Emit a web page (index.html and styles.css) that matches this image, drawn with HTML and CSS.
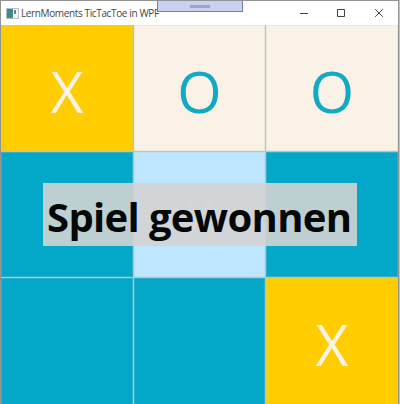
FILE: index.html
```html
<!DOCTYPE html>
<html lang="de">
<head>
<meta charset="utf-8">
<title>LernMoments TicTacToe in WPF</title>
<link rel="stylesheet" href="styles.css">
</head>
<body>
<div class="window">
  <header class="titlebar">
    <svg class="app-icon" width="13" height="11" viewBox="0 0 13 11">
      <defs><linearGradient id="g" x1="0" y1="0" x2="0" y2="1"><stop offset="0" stop-color="#3f7fa8"/><stop offset="1" stop-color="#3c9474"/></linearGradient></defs>
      <rect x=".5" y=".5" width="12" height="10" fill="#f2f5f5" stroke="#b9bfc2"/>
      <rect x="1" y="1" width="6" height="9" fill="url(#g)"/>
      <rect x="8" y="2" width="2" height="4" fill="#64858a"/>
    </svg>
    <span class="title">LernMoments TicTacToe in WPF</span>
    <div class="controls">
      <svg width="88" height="12" viewBox="0 0 88 12" fill="none" stroke="#444" stroke-width="1">
        <path d="M1 6.5h8M38.5 2.5h7v7h-7zM76.2 2.2l7.6 7.6M83.8 2.2l-7.6 7.6"/>
      </svg>
    </div>
    <div class="debug-tab"><span class="grip"></span></div>
  </header>
  <main class="board">
    <div class="cell win">X</div>
    <div class="cell taken">O</div>
    <div class="cell taken">O</div>
    <div class="cell"></div>
    <div class="cell hover">X</div>
    <div class="cell"></div>
    <div class="cell"></div>
    <div class="cell"></div>
    <div class="cell win">X</div>
    <div class="message"><span class="message-text">Spiel gewonnen</span></div>
  </main>
</div>
</body>
</html>
```
FILE: styles.css
```css
* { box-sizing: border-box; }
body { margin: 0; background: #c2c2c2; font-family: "Open Sans", "Noto Sans", sans-serif; }
.window {
  width: 399px;
  height: 404px;
  overflow: hidden;
  display: flex;
  flex-direction: column;
  border: solid #929292;
  border-width: 1px 1px 0;
  background: #fff;
}
.titlebar {
  position: relative;
  flex: none;
  height: 24px;
  display: flex;
  align-items: center;
  padding: 0 11px 0 5px;
}
.app-icon { flex: none; margin-right: 2px; }
.title { font-size: 10px; line-height: 14px; color: #444; white-space: nowrap; letter-spacing: -0.37px; }
.controls { margin-left: auto; height: 12px; display: flex; }
.debug-tab {
  position: absolute;
  left: 156px;
  top: 0;
  width: 86px;
  height: 11px;
  display: flex;
  justify-content: center;
  padding-top: 4px;
  background: #c9d3f1;
  border: 1px solid #727fad;
  border-top: 0;
}
.grip { width: 20px; height: 3px; background: #99a3c5; }
.board {
  position: relative;
  flex: 1;
  display: grid;
  grid-template-columns: 132px 131px 132px;
  grid-template-rows: 126px 125px 127px;
  gap: 1px;
  background: #b4c4cf;
}
.cell {
  display: flex;
  align-items: center;
  justify-content: center;
  padding-top: 5px;
  background: #03a8c8;
  box-shadow: inset 0 0 0 1px rgba(190, 200, 210, 0.25);
  color: #faf2e6;
  font-size: 57px;
  line-height: 76px;
}
.win { background: #ffcd00; }
.taken { background: #faf2e6; color: #10a9c6; }
.hover { background: #bee6fe; }
.message {
  position: absolute;
  left: 42px;
  top: 158px;
  width: 314px;
  height: 63px;
  padding-left: 4px;
  background: rgba(211, 211, 211, 0.9);
}
.message-text {
  font-size: 40px;
  font-weight: 700;
  line-height: 67px;
  letter-spacing: -0.65px;
  color: #050807;
  white-space: nowrap;
}
```
